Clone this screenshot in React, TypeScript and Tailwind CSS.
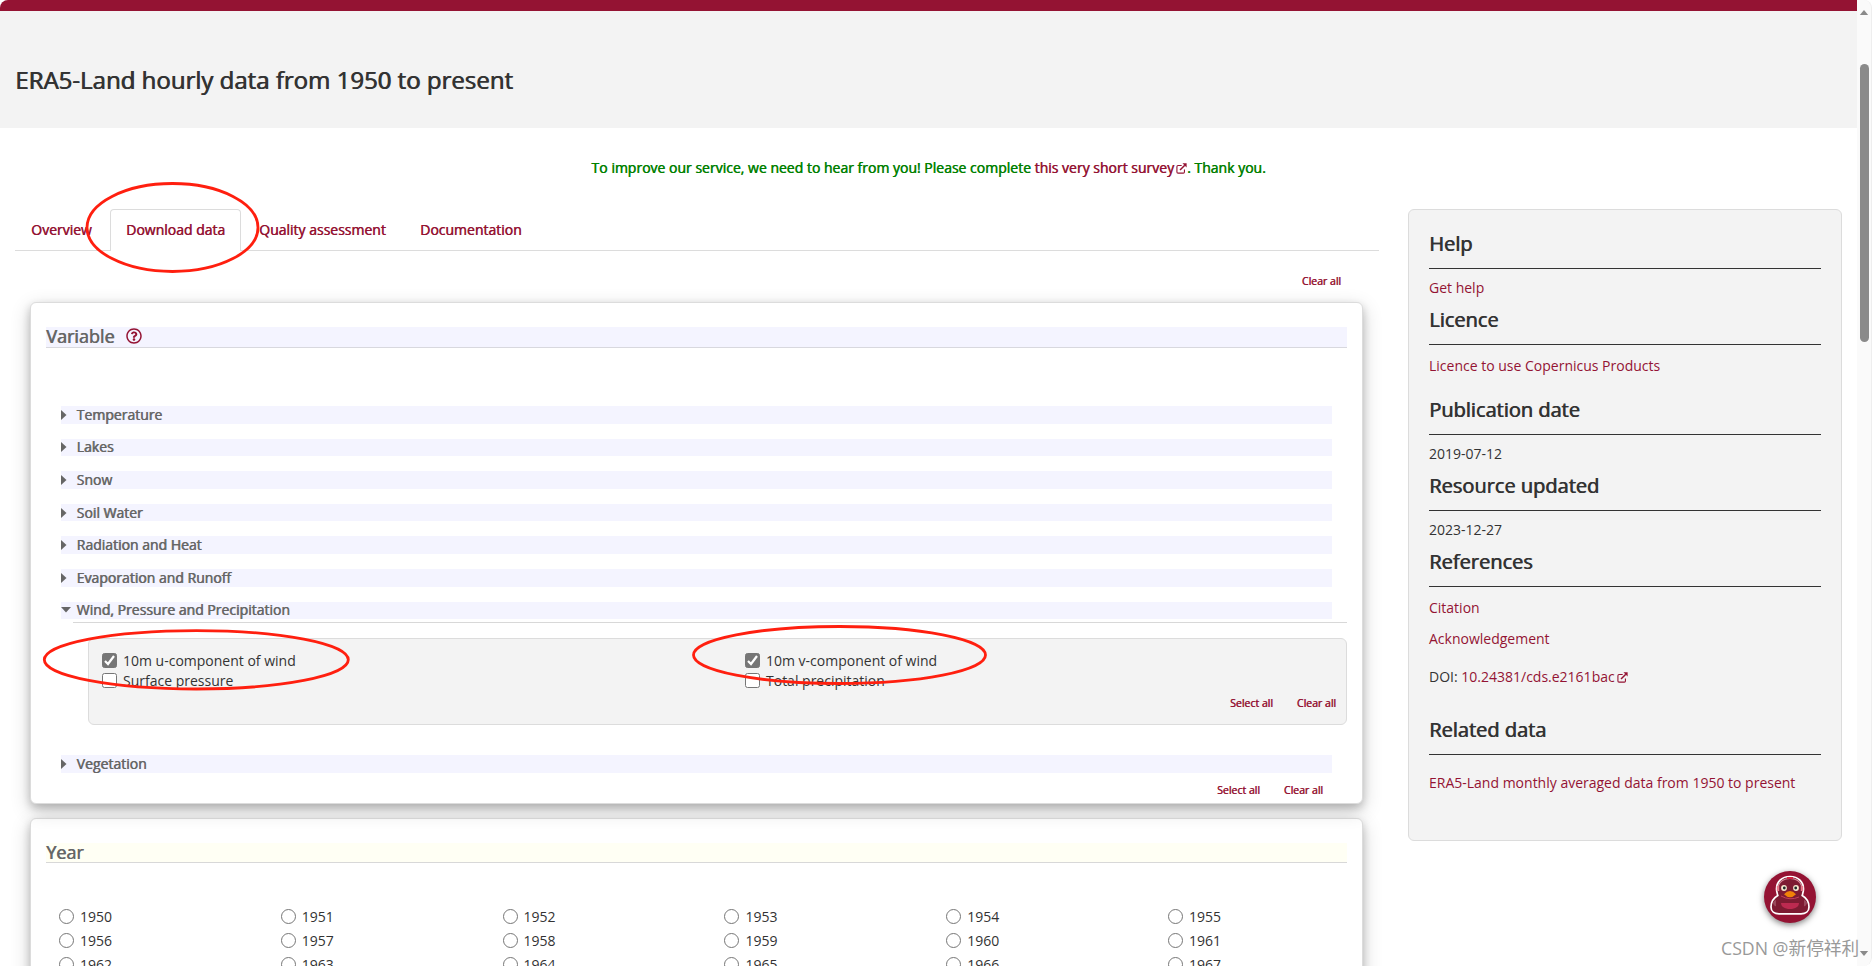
import { FaRegQuestionCircle } from "react-icons/fa";

const variableGroups = [
  "Temperature",
  "Lakes",
  "Snow",
  "Soil Water",
  "Radiation and Heat",
  "Evaporation and Runoff",
];

const windVariables = [
  { label: "10m u-component of wind", checked: true },
  { label: "10m v-component of wind", checked: true },
  { label: "Surface pressure", checked: false },
  { label: "Total precipitation", checked: false },
];

const years = Array.from({ length: 18 }, (_, i) => 1950 + i);

function ExternalIcon() {
  return (
    <svg viewBox="0 0 12 12" className="ml-0.5 inline-block h-[11px] w-[11px] align-[-1px]" fill="none" stroke="currentColor" strokeWidth="1.2">
      <path d="M6.2 2.8H2.2Q1 2.8 1 4v5.8Q1 11 2.2 11H8q1.2 0 1.2-1.2V7" />
      <path d="M4.4 7.6 9.6 2.4" strokeWidth="1.7" />
      <path d="M7 .4h4.6V5z" fill="currentColor" stroke="none" />
    </svg>
  );
}

function SmallActions({ className, select = true }: { className: string; select?: boolean }) {
  return (
    <div className={`flex justify-end gap-6 text-[10.5px] leading-4 text-[#941333] [text-shadow:0.5px_0_0_currentColor] ${className}`}>
      {select && <a href="#">Select all</a>}
      <a href="#">Clear all</a>
    </div>
  );
}

function GroupRow({ label, open = false }: { label: string; open?: boolean }) {
  return (
    <div className="flex h-[17.6px] items-center bg-[#f4f4ff] text-sm text-[#666] [text-shadow:0.6px_0_0_currentColor]">
      <svg viewBox="0 0 10 10" className="mr-[5.5px] h-2.5 w-2.5" fill="#666">
        {open ? <path d="M0 2h10L5 7.5z" /> : <path d="M0 0l5.5 5-5.5 5z" />}
      </svg>
      {label}
    </div>
  );
}

function SideHeading({ children, className = "" }: { children: string; className?: string }) {
  return (
    <h3 className={`h-[38px] border-b border-[#333] text-xl leading-[25px] [text-shadow:0.7px_0_0_currentColor] ${className}`}>
      {children}
    </h3>
  );
}

function Sidebar() {
  return (
    <aside className="h-[632px] w-[434px] shrink-0 rounded-md border border-[#dcdcdc] bg-[#f3f3f3] px-5 pt-[21px] text-sm leading-5 text-[#333]">
      <SideHeading>Help</SideHeading>
      <a href="#" className="mt-[9px] block text-[#941333]">Get help</a>
      <SideHeading className="mt-[9px]">Licence</SideHeading>
      <a href="#" className="mt-[11px] block text-[#941333]">Licence to use Copernicus Products</a>
      <SideHeading className="mt-[21px]">Publication date</SideHeading>
      <p className="mt-[9px]">2019-07-12</p>
      <SideHeading className="mt-[9px]">Resource updated</SideHeading>
      <p className="mt-[9px]">2023-12-27</p>
      <SideHeading className="mt-[9px]">References</SideHeading>
      <a href="#" className="mt-[11px] block text-[#941333]">Citation</a>
      <a href="#" className="mt-[11px] block text-[#941333]">Acknowledgement</a>
      <p className="mt-[18px]">
        DOI: <a href="#" className="text-[#941333]">10.24381/cds.e2161bac<ExternalIcon /></a>
      </p>
      <SideHeading className="mt-[30px]">Related data</SideHeading>
      <a href="#" className="mt-[18px] block text-[#941333]">ERA5-Land monthly averaged data from 1950 to present</a>
    </aside>
  );
}

function VariableCard() {
  return (
    <section className="relative h-[502px] rounded-md border border-[#dcdcdc] bg-white px-[15px] pt-6 shadow-[0_4px_8px_0_rgba(0,0,0,0.2),0_6px_20px_0_rgba(0,0,0,0.19)]">
      <h2 className="flex h-[21px] items-center border-b border-[#d8d8de] bg-[#f4f4ff] text-lg leading-5 text-[#666] [text-shadow:0.7px_0_0_currentColor]">
        <span className="-mt-0.5">Variable</span>
        <FaRegQuestionCircle className="-mt-0.5 ml-3 h-4 w-4 text-[#941333]" />
      </h2>
      <div className="mt-[58px] flex flex-col gap-[15px] px-[15px]">
        {variableGroups.map((g) => (
          <GroupRow key={g} label={g} />
        ))}
        <GroupRow label="Wind, Pressure and Precipitation" open />
      </div>
      <div className="ml-[27px] mt-[3px] border-t border-[#d8d8d8]" />
      <div className="ml-[42px] mt-[15px] h-[87px] rounded-md border border-[#dcdcdc] bg-[#f3f3f3] pl-[13px] pr-[10px] pt-3">
        <div className="grid grid-cols-[643px_1fr]">
          {windVariables.map((v) => (
            <label key={v.label} className="flex h-5 items-center text-sm text-[#333]">
              <span className={`-mt-px mr-1.5 flex h-[15px] w-[15px] items-center justify-center rounded-[2.5px] border border-[#767676] ${v.checked ? "bg-[#767676]" : "bg-white"}`}>
                {v.checked && (
                  <svg viewBox="0 0 13 13" className="h-[13px] w-[13px]" fill="none" stroke="#fff" strokeWidth="2.2">
                    <path d="M2 7l3 3 6-8" />
                  </svg>
                )}
              </span>
              {v.label}
            </label>
          ))}
        </div>
        <SmallActions className="mt-1" />
      </div>
      <div className="mt-[30px] px-[15px]">
        <GroupRow label="Vegetation" />
      </div>
      <SmallActions className="mt-[9px] pr-6" />
    </section>
  );
}

function YearCard() {
  return (
    <section className="mt-[14px] h-[400px] rounded-md border border-[#dcdcdc] bg-white px-[15px] pt-6 shadow-[0_4px_8px_0_rgba(0,0,0,0.2),0_6px_20px_0_rgba(0,0,0,0.19)]">
      <h2 className="h-5 border-b border-[#d8d8d8] bg-[#fffff4] text-lg leading-[18px] text-[#666] [text-shadow:0.7px_0_0_currentColor]">Year</h2>
      <div className="ml-[13px] mt-[42px] grid grid-cols-[repeat(6,221.8px)]">
        {years.map((y) => (
          <label key={y} className="flex h-6 items-center text-sm text-[#333]">
            <span className="-mt-0.5 mr-1.5 h-[15px] w-[15px] rounded-full border border-[#767676] bg-white" />
            {y}
          </label>
        ))}
      </div>
    </section>
  );
}

function DuckButton() {
  return (
    <button className="absolute left-[1764px] top-[871px] h-[52px] w-[52px] rounded-full bg-[#941333] shadow-[0_2px_6px_rgba(0,0,0,0.5)]">
      <svg viewBox="0 0 52 52" className="h-full w-full">
        <path
          d="M26 5.5c-8.5 0-13.5 5.500-13.500 12.500 0 3 .8 4.500 1.300 6.500C9.500 27 7 30.500 7 36c0 4.500 3.500 6.800 8 6.800h22c4.500 0 8-2.300 8-6.800 0-5.500-2.500-9-6.800-11.500.5-2 1.300-3.500 1.300-6.500 0-7-5-12.500-13.500-12.500z"
          fill="#7d1b32"
          stroke="#fff"
          strokeWidth="1.7"
        />
        <path d="M14 15.500C16 9.500 20 7.500 26 7.500s10 2 12 8" fill="none" stroke="#d8899a" strokeWidth="1.200" />
        <path d="M23 7h6" stroke="#d02040" strokeWidth="2" />
        <path d="M14 15v5M38 15v5" stroke="#e8798c" strokeWidth="2.400" />
        <path d="M17 25q9 5 18 1" fill="none" stroke="#c0405c" strokeWidth="1" />
        <path d="M9 32q1-3 3-3v6q-2 1-3-3zM43 32q-1-3-3-3v6q2 1 3-3z" fill="#9a4a5c" />
        <circle cx="20" cy="17" r="2.900" fill="#f7ead0" />
        <circle cx="32" cy="17" r="2.900" fill="#f7ead0" />
        <circle cx="20.300" cy="17" r="1.400" fill="#1c2a2a" />
        <circle cx="31.700" cy="17" r="1.400" fill="#1c2a2a" />
        <path d="M20 23.200q3-3.200 6-3.200t6 3.200q-3 3-6 3t-6-3z" fill="#f08208" />
        <path d="M17 32h18c0 3.500-3.500 6-9 6s-9-2.500-9-6z" fill="#bc2a50" />
      </svg>
    </button>
  );
}

export default function App() {
  return (
    <div className="relative flex h-[966px] w-[1872px] overflow-hidden rounded-br-lg bg-white font-['Open_Sans','Noto_Sans_CJK_SC',sans-serif]">
      <div className="w-[1857px] overflow-hidden">
        <header className="h-[128px] rounded-tl-lg border-t-[11px] border-[#941333] bg-[#f3f3f3] pl-[15px] pt-[50px]">
          <h1 className="text-2xl leading-[38px] text-[#333] [text-shadow:0.8px_0_0_currentColor]">
            ERA5-Land hourly data from 1950 to present
          </h1>
        </header>
        <p className="mt-[30px] text-center text-sm leading-5 text-[#008000] [text-shadow:0.5px_0_0_currentColor]">
          To improve our service, we need to hear from you! Please complete{" "}
          <a href="#" className="text-[#941333] [text-shadow:0.5px_0_0_currentColor]">this very short survey<ExternalIcon /></a>. Thank you.
        </p>
        <div className="mt-[31px] flex gap-[29px] pl-[15px]">
          <main className="w-[1364px]">
            <nav className="flex h-[42px] border-b border-[#dcdcdc] text-sm leading-[41px] text-[#941333] [text-shadow:0.5px_0_0_currentColor]">
              <a href="#" className="w-[95px] pl-4">Overview</a>
              <a href="#" className="h-[42px] w-[131px] rounded-t border border-b-0 border-[#dcdcdc] bg-white pl-[15px] leading-[39px]">Download data</a>
              <a href="#" className="w-[163px] pl-[18px]">Quality assessment</a>
              <a href="#" className="pl-4">Documentation</a>
            </nav>
            <SmallActions className="mt-[22px] pr-[38px]" select={false} />
            <div className="ml-[15px] mt-[13px] w-[1333px]">
              <VariableCard />
              <YearCard />
            </div>
          </main>
          <Sidebar />
        </div>
      </div>

      {/* scrollbar */}
      <div className="flex w-[15px] flex-col items-center rounded-tr-lg rounded-br-lg border-r border-[#eee] bg-[#fafafa]">
        <svg viewBox="0 0 10 6" className="mt-2.5 h-[5px] w-2.5 shrink-0" fill="#8a8a8a">
          <path d="M0 6h10L5 0z" />
        </svg>
        <div className="mt-[49px] h-[278px] w-[9px] shrink-0 rounded-full bg-[#8a8a8a]" />
        <svg viewBox="0 0 10 6" className="mb-2.5 mt-auto h-[5px] w-2.5" fill="#8a8a8a">
          <path d="M0 0h10L5 6z" />
        </svg>
      </div>

      <DuckButton />

      {/* hand-drawn marks over the page */}
      <svg viewBox="0 0 1872 966" className="pointer-events-none absolute inset-0 h-full w-full" fill="none" stroke="#ff1f0f" strokeWidth="2.8">
        <ellipse cx="172.5" cy="227.5" rx="85.5" ry="44" />
        <ellipse cx="196.3" cy="659.8" rx="152" ry="29.2" />
        <ellipse cx="839.5" cy="655" rx="146" ry="28.5" />
      </svg>
      <span className="absolute left-[1721px] top-[935px] whitespace-nowrap text-[17.7px] leading-[26px] text-[#999] [text-shadow:-1px_-1px_0_#fff]">
        CSDN @新停祥利
      </span>
    </div>
  );
}
